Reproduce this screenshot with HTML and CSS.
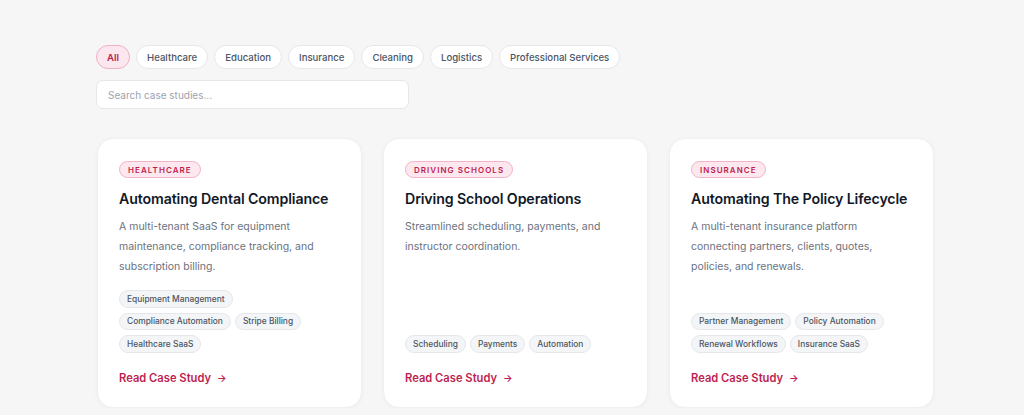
FILE: index.html
```html
<!DOCTYPE html>
<html>
<head>
<meta charset="utf-8">
<link rel="stylesheet" href="styles.css">
</head>
<body>
<main class="page">
  <div class="filters">
    <button class="pill active">All</button>
    <button class="pill">Healthcare</button>
    <button class="pill">Education</button>
    <button class="pill">Insurance</button>
    <button class="pill">Cleaning</button>
    <button class="pill">Logistics</button>
    <button class="pill">Professional Services</button>
  </div>
  <input class="search" type="text" placeholder="Search case studies...">
  <div class="grid">
    <article class="card">
      <span class="badge">Healthcare</span>
      <h3 class="title">Automating Dental Compliance</h3>
      <p class="desc">A multi-tenant SaaS for equipment maintenance, compliance tracking, and subscription billing.</p>
      <div class="tags">
        <span class="tag">Equipment Management</span>
        <span class="tag">Compliance Automation</span>
        <span class="tag">Stripe Billing</span>
        <span class="tag">Healthcare SaaS</span>
      </div>
      <a class="link" href="#">Read Case Study <span class="arrow">→</span></a>
    </article>
    <article class="card">
      <span class="badge">Driving Schools</span>
      <h3 class="title">Driving School Operations</h3>
      <p class="desc">Streamlined scheduling, payments, and instructor coordination.</p>
      <div class="tags">
        <span class="tag">Scheduling</span>
        <span class="tag">Payments</span>
        <span class="tag">Automation</span>
      </div>
      <a class="link" href="#">Read Case Study <span class="arrow">→</span></a>
    </article>
    <article class="card">
      <span class="badge">Insurance</span>
      <h3 class="title">Automating The Policy Lifecycle</h3>
      <p class="desc">A multi-tenant insurance platform connecting partners, clients, quotes, policies, and renewals.</p>
      <div class="tags">
        <span class="tag">Partner Management</span>
        <span class="tag">Policy Automation</span>
        <span class="tag">Renewal Workflows</span>
        <span class="tag">Insurance SaaS</span>
      </div>
      <a class="link" href="#">Read Case Study <span class="arrow">→</span></a>
    </article>
  </div>
</main>
</body>
</html>
```

FILE: styles.css
```css
* { box-sizing: border-box; }
html, body { margin: 0; padding: 0; }
body {
  background: #f6f6f6;
  font-family: Inter, "Noto Sans", sans-serif;
  color: #111827;
}
.page {
  padding: 45px 0 0 96px;
  width: 940px;
}
.filters {
  display: flex;
  gap: 6px;
  flex-wrap: wrap;
}
.pill {
  height: 24px;
  padding: 0 10px;
  border-radius: 999px;
  border: 1px solid #e5e7eb;
  background: #ffffff;
  font-family: inherit;
  font-size: 9.6px;
  font-weight: 500;
  color: #4b5563;
  cursor: pointer;
}
.pill.active {
  background: #fce7ee;
  border-color: #eeb0c4;
  color: #be1e50;
  font-weight: 600;
}
.search {
  display: block;
  margin-top: 11px;
  width: 313px;
  height: 29px;
  border: 1px solid #e5e7eb;
  border-radius: 7px;
  background: #fff;
  padding: 0 11px;
  font-family: inherit;
  font-size: 10px;
  color: #374151;
  outline: none;
}
.search::placeholder { color: #9ca3af; }
.grid {
  margin-top: 29px;
  display: grid;
  grid-template-columns: repeat(3, 265px);
  gap: 21px;
  margin-left: 1px;
}
.card {
  background: #fff;
  border-radius: 16px;
  border: 1px solid #f0f0f0;
  box-shadow: 0 1px 4px rgba(0,0,0,0.04);
  padding: 22px 21px 21px 21px;
  display: flex;
  flex-direction: column;
  align-items: flex-start;
}
.badge {
  height: 17px;
  display: inline-flex;
  align-items: center;
  padding: 0 8px;
  border-radius: 999px;
  background: #fde8ef;
  border: 1px solid #f2b3c6;
  color: #be1e50;
  font-size: 8px;
  font-weight: 600;
  letter-spacing: 1.05px;
  text-transform: uppercase;
}
.title {
  margin: 11px 0 0;
  font-size: 14.2px;
  line-height: 20px;
  font-weight: 600;
  color: #111827;
  letter-spacing: -0.12px;
  white-space: nowrap;
}
.desc {
  margin: 8px 0 0;
  font-size: 10.5px;
  line-height: 20px;
  color: #6b7280;
}
.tags {
  margin-top: auto;
  padding-top: 13px;
  display: flex;
  flex-wrap: wrap;
  gap: 5px 4px;
}
.tag {
  height: 17.5px;
  display: inline-flex;
  align-items: center;
  padding: 0 7px;
  border-radius: 999px;
  background: #f4f5f7;
  border: 1px solid #e5e7eb;
  color: #4b5563;
  font-size: 8.4px;
  font-weight: 500;
}
.link {
  margin-top: 17px;
  font-size: 11.2px;
  line-height: 16px;
  font-weight: 600;
  color: #be1e50;
  text-decoration: none;
}
.arrow { margin-left: 3px; font-size: 10px; }
```
